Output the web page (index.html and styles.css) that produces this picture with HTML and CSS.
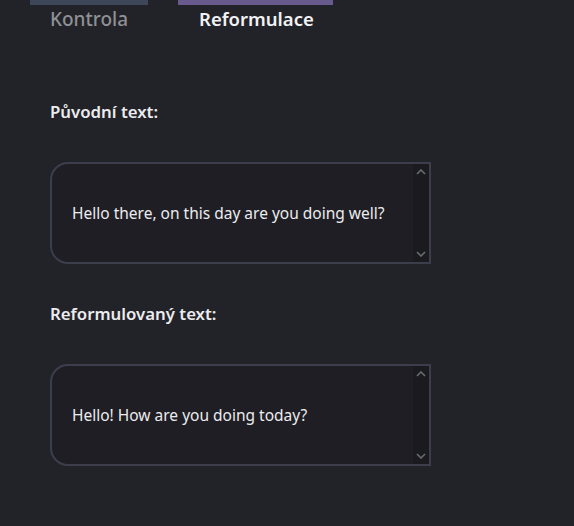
FILE: index.html
```html
<!DOCTYPE html>
<html>
<head>
<meta charset="utf-8">
<link rel="stylesheet" href="styles.css">
</head>
<body>
<div class="tabs">
  <div class="tab tab-inactive"><div class="bar"></div><span>Kontrola</span></div>
  <div class="tab tab-active"><div class="bar"></div><span>Reformulace</span></div>
</div>
<div class="content">
  <div class="field">
    <div class="label">Původní text:</div>
    <div class="box">
      <div class="text">Hello there, on this day are you doing well?</div>
      <div class="scroll">
        <svg width="10" height="6" viewBox="0 0 10 6"><path d="M1 5 L5 1 L9 5" fill="none" stroke="#6a6b72" stroke-width="1.6"/></svg>
        <svg width="10" height="6" viewBox="0 0 10 6"><path d="M1 1 L5 5 L9 1" fill="none" stroke="#6a6b72" stroke-width="1.6"/></svg>
      </div>
    </div>
  </div>
  <div class="field">
    <div class="label">Reformulovaný text:</div>
    <div class="box">
      <div class="text">Hello! How are you doing today?</div>
      <div class="scroll">
        <svg width="10" height="6" viewBox="0 0 10 6"><path d="M1 5 L5 1 L9 5" fill="none" stroke="#6a6b72" stroke-width="1.6"/></svg>
        <svg width="10" height="6" viewBox="0 0 10 6"><path d="M1 1 L5 5 L9 1" fill="none" stroke="#6a6b72" stroke-width="1.6"/></svg>
      </div>
    </div>
  </div>
</div>
</body>
</html>
```
FILE: styles.css
```css
html, body {
  margin: 0;
  padding: 0;
  background: #222329;
  font-family: "Noto Sans", "Lato", sans-serif;
  color: #e8e8ea;
}
.tabs {
  display: flex;
  padding-left: 30px;
  gap: 30px;
}
.tab {
  display: flex;
  flex-direction: column;
}
.tab .bar {
  height: 5px;
}
.tab span {
  line-height: 20px;
  margin-top: 4px;
}
.tab-inactive {
  width: 118px;
}
.tab-inactive .bar {
  background: #3e4659;
}
.tab-inactive span {
  color: #8f9094;
  padding-left: 20px;
  font-size: 19px;
  font-weight: 500;
}
.tab-active {
  width: 155px;
}
.tab-active .bar {
  background: #695a8e;
}
.tab-active span {
  color: #f2f2f4;
  padding-left: 21px;
  font-size: 18.5px;
  font-weight: 600;
}
.content {
  padding: 72px 0 0 50px;
}
.field {
  margin-bottom: 39px;
}
.label {
  font-size: 16.8px;
  font-weight: 600;
  line-height: 22px;
  color: #ececee;
}
.box {
  margin-top: 39px;
  width: 377px;
  height: 98px;
  border: 2px solid #3c3e4b;
  border-radius: 18px 0 0 18px;
  background: #1f1e24;
  display: flex;
  overflow: hidden;
}
.text {
  flex: 1;
  display: flex;
  align-items: center;
  padding-left: 20px;
  font-size: 15.5px;
  color: #ececee;
}
.scroll {
  width: 16px;
  background: #1b1b1f;
  display: flex;
  flex-direction: column;
  justify-content: space-between;
  align-items: center;
  padding: 5px 0 5px;
}
.scroll svg {
  display: block;
}
```
